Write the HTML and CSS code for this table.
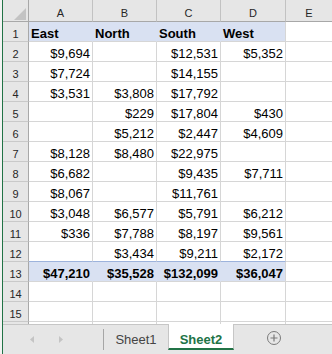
FILE: index.html
```html
<!DOCTYPE html>
<html>
<head>
<meta charset="utf-8">
<link rel="stylesheet" href="styles.css">
</head>
<body>
<div class="app">
  <div class="main">
    <div class="sheet">
      <div class="grid">
        <div class="corner"><svg width="12" height="12" viewBox="0 0 12 12"><polygon points="12,0 12,12 0,12" fill="#c3c3c3"/></svg></div>
        <div class="ch">A</div><div class="ch">B</div><div class="ch">C</div><div class="ch">D</div><div class="ch ch-e">E</div>

        <div class="rh">1</div><div class="cell hd">East</div><div class="cell hd">North</div><div class="cell hd">South</div><div class="cell hd edge">West</div><div class="cell e"></div>
        <div class="rh">2</div><div class="cell num">$9,694</div><div class="cell num"></div><div class="cell num">$12,531</div><div class="cell num">$5,352</div><div class="cell e"></div>
        <div class="rh">3</div><div class="cell num">$7,724</div><div class="cell num"></div><div class="cell num">$14,155</div><div class="cell num"></div><div class="cell e"></div>
        <div class="rh">4</div><div class="cell num">$3,531</div><div class="cell num">$3,808</div><div class="cell num">$17,792</div><div class="cell num"></div><div class="cell e"></div>
        <div class="rh">5</div><div class="cell num"></div><div class="cell num">$229</div><div class="cell num">$17,804</div><div class="cell num">$430</div><div class="cell e"></div>
        <div class="rh">6</div><div class="cell num"></div><div class="cell num">$5,212</div><div class="cell num">$2,447</div><div class="cell num">$4,609</div><div class="cell e"></div>
        <div class="rh">7</div><div class="cell num">$8,128</div><div class="cell num">$8,480</div><div class="cell num">$22,975</div><div class="cell num"></div><div class="cell e"></div>
        <div class="rh">8</div><div class="cell num">$6,682</div><div class="cell num"></div><div class="cell num">$9,435</div><div class="cell num">$7,711</div><div class="cell e"></div>
        <div class="rh">9</div><div class="cell num">$8,067</div><div class="cell num"></div><div class="cell num">$11,761</div><div class="cell num"></div><div class="cell e"></div>
        <div class="rh">10</div><div class="cell num">$3,048</div><div class="cell num">$6,577</div><div class="cell num">$5,791</div><div class="cell num">$6,212</div><div class="cell e"></div>
        <div class="rh">11</div><div class="cell num">$336</div><div class="cell num">$7,788</div><div class="cell num">$8,197</div><div class="cell num">$9,561</div><div class="cell e"></div>
        <div class="rh">12</div><div class="cell num above"></div><div class="cell num above">$3,434</div><div class="cell num above">$9,211</div><div class="cell num above">$2,172</div><div class="cell e"></div>
        <div class="rh">13</div><div class="cell num tot">$47,210</div><div class="cell num tot">$35,528</div><div class="cell num tot">$132,099</div><div class="cell num tot edge">$36,047</div><div class="cell e"></div>
        <div class="rh">14</div><div class="cell"></div><div class="cell"></div><div class="cell"></div><div class="cell"></div><div class="cell e"></div>
        <div class="rh">15</div><div class="cell"></div><div class="cell"></div><div class="cell"></div><div class="cell"></div><div class="cell e"></div>
        <div class="rh"></div><div class="cell"></div><div class="cell"></div><div class="cell"></div><div class="cell"></div><div class="cell e"></div>
      </div>
    </div>
    <div class="tabbar">
      <div class="nav">
        <svg width="4" height="7" viewBox="0 0 4 7"><polygon points="4,0 4,7 0,3.5" fill="#c4c4c4"/></svg>
        <svg width="4" height="7" viewBox="0 0 4 7"><polygon points="0,0 0,7 4,3.5" fill="#c4c4c4"/></svg>
      </div>
      <div class="sep"></div>
      <div class="tab">Sheet1</div>
      <div class="tab active">Sheet2</div>
      <svg class="add" width="16" height="16" viewBox="0 0 16 16">
        <circle cx="8" cy="8" r="6.5" fill="none" stroke="#7a7a7a" stroke-width="1"/>
        <path d="M8 4.5v7M4.5 8h7" stroke="#7a7a7a" stroke-width="1.2" fill="none"/>
      </svg>
    </div>
  </div>
</div>
</body>
</html>
```

FILE: styles.css
```css
html, body {
  margin: 0;
  padding: 0;
  background: #ffffff;
}

body {
  font-family: "Liberation Sans", Arial, sans-serif;
}

.app {
  width: 332px;
  height: 354px;
  box-sizing: border-box;
  padding-left: 2px;
  background: #f3f3f3;
  display: flex;
  overflow: hidden;
}

.main {
  flex: 1;
  min-width: 0;
  border-left: 1px solid #217346;
  background: #ffffff;
  display: flex;
  flex-direction: column;
}

.sheet {
  height: 324px;
  flex: none;
  overflow: hidden;
}

.grid {
  display: grid;
  grid-template-columns: 26px 64px 64px 64px 65px 46px;
  grid-template-rows: 22px repeat(16, 20px);
}

.grid > div {
  box-sizing: border-box;
  white-space: nowrap;
  overflow: hidden;
}

.corner {
  background: #e6e6e6;
  border-right: 1px solid #a8a8a8;
  border-bottom: 1px solid #a8a8a8;
  display: flex;
  justify-content: flex-end;
  align-items: flex-end;
  padding: 0 2px 1px 0;
}

.corner svg {
  display: block;
}

.ch {
  background: #e6e6e6;
  border-right: 1px solid #c2c2c2;
  border-bottom: 1px solid #a8a8a8;
  color: #262626;
  font-size: 11px;
  line-height: 15px;
  padding-top: 6px;
  text-align: center;
}

.ch-e {
  border-right: none;
}

.rh {
  background: #e6e6e6;
  border-right: 1px solid #a8a8a8;
  border-bottom: 1px solid #c9c9c9;
  color: #262626;
  font-size: 11px;
  line-height: 15px;
  padding-top: 5px;
  text-align: center;
}

.cell {
  border-right: 1px solid #d6d6d6;
  border-bottom: 1px solid #d6d6d6;
  color: #000000;
  font-size: 13px;
  line-height: 15px;
  padding: 4px 2px 0 2px;
  text-align: left;
}

.cell.e {
  border-right: none;
}

.num {
  text-align: right;
}

.hd {
  background: #d9e1f2;
  font-weight: bold;
  border-right-color: #d9e1f2;
}

.tot {
  background: #d9e1f2;
  font-weight: bold;
  border-right-color: #d9e1f2;
}

.hd.edge,
.tot.edge {
  border-right-color: #d6d6d6;
}

.above {
  border-bottom-color: #9db3dc;
}

.tabbar {
  flex: 1;
  box-sizing: border-box;
  background: #e6e6e6;
  border-top: 1px solid #c6c6c6;
  display: flex;
  align-items: flex-start;
}

.nav {
  width: 100px;
  flex: none;
  display: flex;
  align-items: center;
  gap: 25px;
  padding-left: 27px;
  box-sizing: border-box;
  height: 29px;
}

.nav svg {
  display: block;
}

.sep {
  width: 1px;
  height: 21px;
  margin-top: 4px;
  background: #a6a6a6;
  flex: none;
}

.tab {
  width: 64px;
  height: 29px;
  flex: none;
  box-sizing: border-box;
  display: flex;
  justify-content: center;
  align-items: center;
  font-size: 13px;
  line-height: 15px;
  color: #444444;
}

.tab.active {
  width: 66px;
  height: 26px;
  margin-top: -1px;
  align-items: flex-start;
  padding-top: 8px;
  background: #ffffff;
  border-left: 1px solid #c6c6c6;
  border-right: 1px solid #c6c6c6;
  border-bottom: 2px solid #217346;
  color: #217346;
  font-weight: bold;
}

.add {
  display: block;
  flex: none;
  margin-left: 32px;
  margin-top: 5px;
}
```
